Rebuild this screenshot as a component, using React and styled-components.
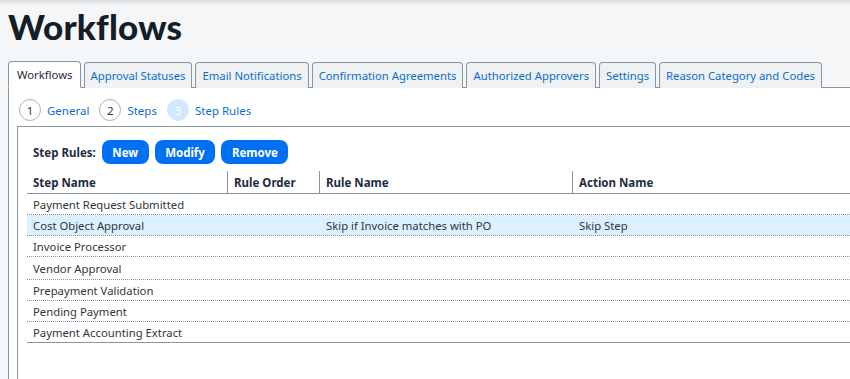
import React from "react";
import styled, { createGlobalStyle } from "styled-components";

const Global = createGlobalStyle`
  html, body { margin: 0; padding: 0; }
  body {
    width: 850px;
    height: 379px;
    overflow: hidden;
    background: linear-gradient(#d9dcdf 0, #f5f6f7 6px) #f5f6f7;
    font-family: "Noto Sans", "Open Sans", sans-serif;
    color: #32363a;
  }
`;

const Page = styled.div`
  padding-left: 8px;
  height: 379px;
  box-sizing: border-box;
  display: flex;
  flex-direction: column;
  overflow: hidden;
`;

const Title = styled.h1`
  margin: 0;
  padding-top: 8px;
  height: 61px;
  flex: none;
  box-sizing: border-box;
  font-family: "Lato", "Open Sans", sans-serif;
  font-weight: 900;
  font-size: 35px;
  line-height: 36px;
  color: #131e29;
  letter-spacing: 0.2px;
`;

const TabBar = styled.div`
  display: flex;
  flex: none;
  gap: 3px;
  align-items: flex-end;
  position: relative;
  z-index: 1;
  margin-bottom: -1px;
`;

const Tab = styled.div`
  box-sizing: border-box;
  padding: 0 ${(p) => (p.$active ? "7px 0 8px" : "6px")};
  display: flex;
  align-items: center;
  border: 1px solid #8396a8;
  border-bottom: ${(p) => (p.$active ? "1px solid #fff" : "none")};
  border-radius: 4px 4px 0 0;
  background: ${(p) => (p.$active ? "#fff" : "#eff1f3")};
  color: ${(p) => (p.$active ? "#1d2d3e" : "#0a6ed1")};
  font-size: 11.3px;
  white-space: nowrap;
  height: ${(p) => (p.$active ? 27 : 26)}px;
`;

const Panel = styled.div`
  flex: 1;
  min-height: 0;
  overflow: hidden;
  background: #fff;
  border-top: 1px solid #8396a8;
  border-left: 1px solid #8396a8;
  padding-left: 8px;
  display: flex;
  flex-direction: column;
`;

const Stepper = styled.div`
  display: flex;
  flex: none;
  align-items: center;
  height: 38px;
  padding: 6px 0 0 2px;
  box-sizing: border-box;
`;

const Step = styled.div`
  display: flex;
  align-items: center;
  gap: 6px;
  margin-right: 10px;
`;

const Circle = styled.span`
  width: 22px;
  height: 22px;
  box-sizing: border-box;
  border-radius: 50%;
  border: 1px solid ${(p) => (p.$current ? "#d1e8ff" : "#a9b4be")};
  background: ${(p) => (p.$current ? "#d1e8ff" : "#fff")};
  color: ${(p) => (p.$current ? "#fff" : "#32363a")};
  font-size: 11.5px;
  display: flex;
  align-items: center;
  justify-content: center;
`;

const StepLabel = styled.span`
  color: #0a6ed1;
  font-size: 11.5px;
`;

const Box = styled.div`
  flex: 1;
  border: 1px solid #8396a8;
  border-bottom: none;
  border-right: none;
  padding: 13px 0 0 9px;
  box-sizing: border-box;
`;

const Toolbar = styled.div`
  display: flex;
  align-items: center;
  gap: 6px;
  padding-left: 6px;
  height: 24px;
  margin-bottom: 7px;
`;

const ToolLabel = styled.span`
  font-weight: 700;
  font-size: 11.5px;
  color: #1d2d3e;
`;

const Button = styled.button`
  height: 24px;
  padding: 0 10.5px;
  border: none;
  border-radius: 8px;
  background: #0070f2;
  color: #fff;
  font-family: "Noto Sans", "Open Sans", sans-serif;
  font-weight: 700;
  font-size: 11.5px;
`;

const Table = styled.div`
  width: 100%;
`;

const HeadRow = styled.div`
  display: grid;
  grid-template-columns: 200px 92px 253px 1fr;
  height: 22px;
  border-bottom: 1px solid #8396a8;
`;

const HeadCell = styled.div`
  display: flex;
  align-items: center;
  padding-left: 6px;
  padding-top: 1px;
  font-weight: 700;
  font-size: 11.5px;
  color: #1d2d3e;
  border-left: ${(p) => (p.$sep ? "1px solid #8396a8" : "none")};
`;

const Row = styled.div`
  display: grid;
  grid-template-columns: 200px 92px 253px 1fr;
  height: ${(p) => (p.$tall ? 22 : 20)}px;
  border-bottom: 1px ${(p) => (p.$last ? "solid" : "dotted")} #8396a8;
  background: ${(p) => (p.$selected ? "#dcf0ff" : "transparent")};
`;

const Cell = styled.div`
  display: flex;
  align-items: center;
  padding-left: ${(p) => (p.$first ? 6 : 7)}px;
  font-size: 11.3px;
  color: #32363a;
  white-space: nowrap;
`;

const tabs = [
  ["Workflows", true],
  ["Approval Statuses"],
  ["Email Notifications"],
  ["Confirmation Agreements"],
  ["Authorized Approvers"],
  ["Settings"],
  ["Reason Category and Codes"],
];

const rows = [
  ["Payment Request Submitted", "", "", ""],
  ["Cost Object Approval", "", "Skip if Invoice matches with PO", "Skip Step", true],
  ["Invoice Processor", "", "", ""],
  ["Vendor Approval", "", "", "", false, true],
  ["Prepayment Validation", "", "", ""],
  ["Pending Payment", "", "", ""],
  ["Payment Accounting Extract", "", "", ""],
];

export default function App() {
  return (
    <Page>
      <Global />
      <Title>Workflows</Title>
      <TabBar>
        {tabs.map(([t, a]) => (
          <Tab key={t} $active={a}>
            {t}
          </Tab>
        ))}
      </TabBar>
      <Panel>
        <Stepper>
          <Step>
            <Circle>1</Circle>
            <StepLabel>General</StepLabel>
          </Step>
          <Step>
            <Circle>2</Circle>
            <StepLabel>Steps</StepLabel>
          </Step>
          <Step>
            <Circle $current>3</Circle>
            <StepLabel>Step Rules</StepLabel>
          </Step>
        </Stepper>
        <Box>
          <Toolbar>
            <ToolLabel>Step Rules:</ToolLabel>
            <Button>New</Button>
            <Button>Modify</Button>
            <Button>Remove</Button>
          </Toolbar>
          <Table>
            <HeadRow>
              <HeadCell>Step Name</HeadCell>
              <HeadCell $sep>Rule Order</HeadCell>
              <HeadCell $sep>Rule Name</HeadCell>
              <HeadCell $sep>Action Name</HeadCell>
            </HeadRow>
            {rows.map(([a, b, c, d, sel, tall], i) => (
              <Row key={a} $selected={sel} $tall={tall} $last={i === rows.length - 1}>
                <Cell $first>{a}</Cell>
                <Cell>{b}</Cell>
                <Cell>{c}</Cell>
                <Cell>{d}</Cell>
              </Row>
            ))}
          </Table>
        </Box>
      </Panel>
    </Page>
  );
}
